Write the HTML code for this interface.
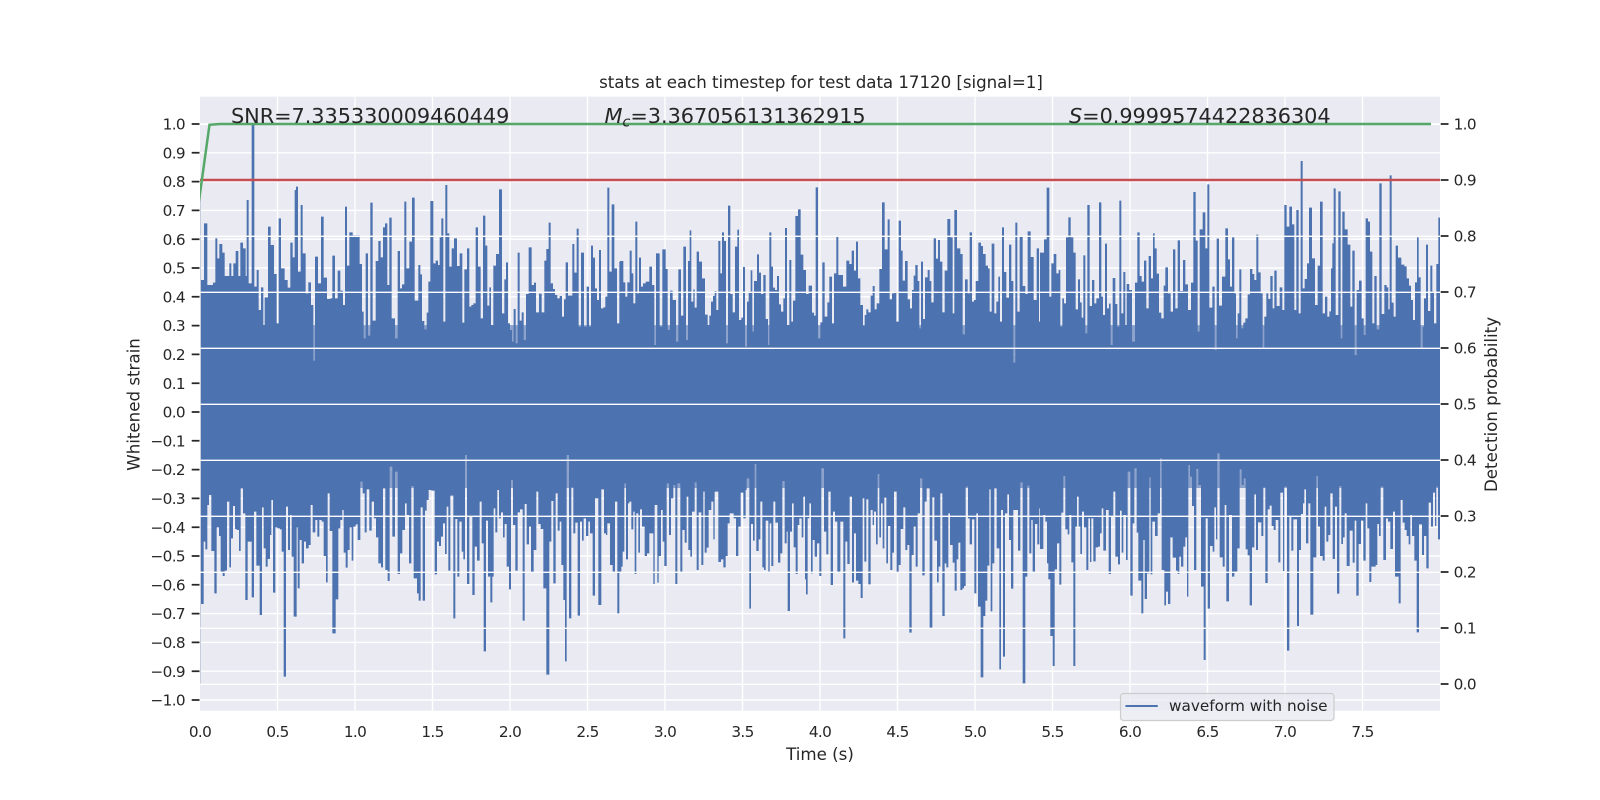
<!DOCTYPE html>
<html>
<head>
<meta charset="utf-8">
<title>stats at each timestep</title>
<style>
html,body{margin:0;padding:0;background:#fff;width:1600px;height:800px;overflow:hidden}
svg{display:block}
text{font-family:"DejaVu Sans",sans-serif;fill:#262626}
.t{font-size:15.28px}
.n{font-size:15.28px;letter-spacing:-.65px}
.l{font-size:16.67px}
.h{font-size:16.67px;letter-spacing:-.04px}
.s{font-size:20.83px;letter-spacing:-.05px}
</style>
</head>
<body>
<svg width="1600" height="800" viewBox="0 0 1600 800" xmlns="http://www.w3.org/2000/svg">
<defs><clipPath id="ax"><rect x="200" y="96.7" width="1240" height="614"/></clipPath></defs>
<rect width="1600" height="800" fill="#fff"/>
<rect x="200" y="96.7" width="1240" height="614" fill="#EAEAF2"/>

<!-- left/vertical grid -->
<path stroke="#fff" stroke-width="1.39" fill="none" d="M200 124H1440M200 152.8H1440M200 181.6H1440M200 210.4H1440M200 239.2H1440M200 268H1440M200 296.8H1440M200 325.6H1440M200 354.4H1440M200 383.2H1440M200 412H1440M200 440.8H1440M200 469.6H1440M200 498.4H1440M200 527.2H1440M200 556H1440M200 584.8H1440M200 613.6H1440M200 642.4H1440M200 671.2H1440M200 700H1440M277.5 96.7V710.7M355 96.7V710.7M432.5 96.7V710.7M510 96.7V710.7M587.5 96.7V710.7M665 96.7V710.7M742.5 96.7V710.7M820 96.7V710.7M897.5 96.7V710.7M975 96.7V710.7M1052.5 96.7V710.7M1130 96.7V710.7M1207.5 96.7V710.7M1285 96.7V710.7M1362.5 96.7V710.7"/>

<!-- waveform -->
<g clip-path="url(#ax)" fill="#4C72B0">
<rect x="200" y="325" width="1240" height="55" fill-opacity=".6"/>
<rect x="200" y="450" width="1240" height="38" fill-opacity=".6"/>
<rect x="200" y="379" width="1240" height="72"/>
<g transform="translate(201,150) scale(.33333)">
<path d="M-3 690V390H9V220H19V405H36V398H43V265H49V325H55V282H64V308H71V378H85V340H91V378H97V340H104V303H112V378H118V278H126V295H134V378H137V150H143V400H152V-78H160V410H167V360H173V480H180V412H187V525H191V442H201V230H209V285H219V372H227V520H233V205H240V355H251V390H260V413H268V278H275V322H281V120H285V110H291V365H299V165H305V310H314V430H322V397H330V465H337V632H342V320H351V400H360V200H368V383H378V447H388V445H394V317H402V445H410V362H418V422H426V465H432V170H438V347H445V247H455V256H466V256H476V342H483V485H488V565H494V310H501V557H508V158H515V512H524V333H532V273H539V322H546V232H552V220H559V405H565V203H572V505H582V565H590V303H597V415H603V403H610V155H616V355H625V275H633V143H641V452H652V345H658V373H663V513H670V538H677V488H682V395H688V153H697V340H704V332H711V345H716V262H721V205H727V515H733V105H739V250H745V350H752V295H759V265H768V348H776V310H784V518H790V358H798V295H805V470H811V465H817V460H824V232H831V350H839V505H846V197H853V287H859V467H865V412H870V525H877V347H885V312H894V118H903V490H910V388H915V337H921V520H927V540H933V575H938V477H944V580H950V308H956V512H962V487H968V570H975V432H983V292H992V405H999V398H1005V487H1014V431H1022V487H1030V332H1036V297H1043V218H1049V400H1056V417H1062V435H1069V445H1076V438H1083V500H1089V448H1094V337H1101V437H1107V437H1114V282H1120V368H1127V236H1133V530H1140V308H1149V530H1157V410H1164V530H1170V287H1176V323H1182V415H1188V450H1194V300H1200V475H1207V472H1213V440H1219V113H1225V365H1232V163H1240V355H1248V520H1255V335H1261V690Z"/>
</g>
<g transform="translate(621,150) scale(.33333)">
<path d="M-3 690V333H7V397H13V440H19V397H26V302H32V370H37V460H43V215H49V430H54V323H60V410H66V400H74V395H85V350H93V405H100V585H105V310H116V530H124V298H134V357H140V540H147V422H155V450H165V575H172V358H180V497H187V290H195V570H201V333H206V241H211V455H217V418H221V473H227V305H234V335H243V385H252V494H260V525H265V497H270V455H276V438H281V423H286V480H292V273H298V370H303V247H309V273H315V580H321V167H328V432H335V487H342V290H349V239H354V510H361V503H366V351H372V590H378V455H383V425H389V361H394V545H399V393H408V313H414V368H420V432H427V375H434V507H441V585H445V247H451V350H456V413H462V420H468V378H474V463H480V485H487V445H492V234H498V525H505V330H511V515H516V452H523V198H531V178H539V314H547V360H555V432H563V407H573V488H579V497H584V112H591V565H598V517H604V337H611V500H619V457H625V380H633V520H639V370H646V260H652V375H660V375H666V410H676V332H685V342H692V302H699V362H705V275H711V385H718V465H726V527H731V495H736V478H742V487H749V437H755V408H761V478H767V460H775V357H783V157H791V298H800V208H806V448H813V430H820V425H826V515H833V212H840V302H845V392H852V333H860V448H867V475H873V420H878V377H883V345H890V393H895V535H900V335H906V507H912V382H920V360H926V393H931V457H938V265H945V326H951V270H957V335H964V487H971V362H979V207H988V262H995V490H1000V180H1008V295H1018V312H1025V553H1032V388H1040V430H1046V247H1053V455H1059V450H1064V393H1072V278H1080V288H1086V312H1094V347H1101V355H1106V485H1112V281H1120V490H1126V455H1132V380H1137V515H1143V232H1149V366H1156V443H1164V284H1171V393H1177V638H1183V218H1189V485H1196V261H1205V408H1213V432H1220V244H1229V321H1238V450H1247V295H1254V515H1261V690Z"/>
</g>
<g transform="translate(1031,150) scale(.33333)">
<path d="M27 690V308H39V268H47V113H55V440H61V340H68V312H76V370H83V360H88V530H94V445H99V460H105V262H112V202H119V262H127V308H134V478H141V388H147V457H152V503H157V316H163V550H169V165H176V468H183V390H190V460H196V445H204V157H211V440H216V495H222V281H228V475H234V461H239V585H245V384H253V462H259V530H265V152H271V490H277V366H283V525H287V402H295V420H303V575H312V398H319V247H326V378H332V395H339V332H346V475H353V318H360V385H366V250H371V295H377V371H384V488H391V505H398V407H403V352H411V430H419V485H426V298H433V475H440V271H447V423H456V330H463V403H471V480H480V398H487V126H494V272H500V545H506V238H515V187H523V295H529V103H535V473H544V410H551V600H557V266H564V467H573V380H583V235H591V328H597V410H603V262H610V430H615V565H620V490H625V358H631V535H637V518H643V505H650V433H657V357H664V372H670V390H676V254H682V367H689V430H695V595H700V500H706V430H712V447H718V378H725V475H730V362H737V468H746V412H754V480H760V165H767V230H775V170H783V223H790V480H796V180H803V490H809V33H815V415H821V387H828V340H834V173H843V325H852V465H860V347H867V155H875V490H882V440H889V500H895V484H900V355H904V280H908V115H914V495H922V124H929V565H934V185H941V238H950V284H958V470H964V302H971V615H977V420H984V392H992V505H998V555H1004V205H1011V215H1017V305H1024V520H1030V378H1037V538H1045V100H1052V492H1060V405H1067V412H1072V478H1076V76H1082V458H1088V500H1094V287H1101V323H1111V344H1120V349H1127V385H1134V407H1140V450H1146V510H1152V397H1158V262H1163V382H1169V595H1175V530H1179V445H1185V284H1191V483H1198V347H1204V425H1209V520H1216V342H1222V203H1232V690Z"/>
</g>
<g transform="translate(201,450) scale(.33333)">
<path d="M-3 0V462H8V275H13V298H19V165H24V135H31V303H40V430H47V232H54V258H59V365H65V378H71V362H78V155H85V352H90V265H96V168H102V237H107V240H114V303H119V115H126V190H133V450H140V275H145V275H152V442H159V185H166V347H176V495H183V172H188V295H194V350H200V327H207V255H211V150H216V428H223V232H229V235H237V238H242V305H248V680H255V170H261V300H267V195H272V320H278V500H287V232H290V415H296V270H302V340H309V275H315V295H323V285H329V165H335V247H343V210H349V260H355V210H362V215H368V318H375V397H380V130H386V243H394V550H404V448H412V235H418V210H424V180H428V308H434V353H440V300H446V232H452V332H457V230H464V223H470V270H478V95H485V130H491V247H497V118H505V242H512V155H519V205H525V262H532V340H540V352H546V115H553V360H560V393H566V50H574V260H582V65H590V372H597V310H604V240H612V160H617V195H624V340H631V108H638V385H648V430H653V452H659V172H665V452H672V182H677V150H683V120H691V122H701V373H708V275H714V288H720V260H726V220H732V312H737V170H742V362H748V137H757V505H763V207H769V380H775V215H782V305H787V328H792V15H798V402H805V200H814V435H821V290H828V332H836V155H842V280H848V604H855V212H861V380H868V457H874V380H878V175H883V247H889V120H894V205H900V187H906V262H911V222H917V350H924V418H930V90H936V225H943V362H950V187H957V178H965V512H971V162H977V283H984V230H990V368H998V300H1006V125H1012V222H1019V237H1027V415H1036V674H1045V275H1051V153H1057V400H1064V130H1070V242H1076V215H1081V345H1087V450H1092V634H1097V15H1104V505H1111V112H1117V250H1123V218H1130V497H1137V215H1143V272H1148V205H1155V258H1162V215H1167V250H1175V437H1182V145H1192V465H1201V118H1209V250H1215V255H1219V220H1227V345H1235V365H1242V155H1249V490H1255V365H1261V0Z"/>
</g>
<g transform="translate(621,450) scale(.33333)">
<path d="M-3 0V350H5V305H10V100H15V328H21V160H25V155H31V238H37V185H41V372H46V190H52V308H57V178H63V230H71V318H78V310H85V250H90V250H97V402H101V165H109V398H113V318H120V180H125V275H130V348H137V100H144V255H150V145H157V105H163V402H169V100H178V365H184V240H191V278H197V140H202V300H208V320H213V185H221V97H227V360H233V187H241V345H247V125H251V308H257V293H263V180H271V155H277V268H281V125H292V336H300V328H307V352H314V318H320V220H326V190H332V190H338V205H345V318H352V230H359V128H367V205H374V120H377V85H385V476H390V222H396V272H401V42H406V303H413V268H418V155H424V352H429V360H434V212H442V365H446V220H451V348H457V155H463V218H471V338H478V310H484V93H491V280H497V245H500V483H507V245H513V160H518V292H524V372H530V225H535V205H542V262H547V140H552V388H555V433H560V205H565V160H570V370H575V270H581V320H588V280H595V378H601V55H609V245H616V313H622V125H629V405H636V185H642V215H649V365H658V215H667V565H673V275H679V342H686V140H693V397H699V250H705V392H712V402H719V444H725V145H730V335H736V148H742V403H749V180H755V225H759V185H765V283H770V72H775V262H780V160H785V295H790V143H796V340H801V228H808V360H814V308H819V125H827V368H833V345H839V237H847V172H853V300H859V285H865V548H872V315H878V230H884V350H890V190H897V85H904V376H911V155H917V115H926V536H934V142H940V272H948V397H953V350H958V130H964V498H971V340H976V352H982V190H987V285H995V338H1001V422H1007V328H1012V278H1018V420H1024V415H1029V408H1034V110H1041V205H1046V283H1053V208H1060V430H1066V190H1071V470H1079V682H1087V498H1093V452H1099V347H1105V118H1109V484H1114V340H1120V115H1127V295H1135V658H1140V180H1146V620H1152V190H1159V133H1164V270H1170V416H1177V180H1184V180H1191V302H1198V97H1205V700H1213V380H1219V107H1225V310H1231V210H1235V365H1242V222H1249V283H1255V175H1261V0Z"/>
</g>
<g transform="translate(1031,450) scale(.33333)">
<path d="M27 0V297H37V195H43V215H48V340H52V388H58V558H65V648H71V358H78V280H85V404H91V188H97V78H103V238H110V253H115V195H121V337H127V648H133V230H138V140H143V230H148V312H153V185H159V232H166V360H172V205H177V336H181V205H187V334H194V292H201V290H207V250H212V175H217V302H225V180H233V372H240V198H247V125H253V320H261V343H267V182H272V308H277V195H285V330H290V65H298V437H305V220H310V55H317V248H322V392H331V490H337V270H341V447H348V370H355V82H359V373H364V215H372V258H380V190H387V25H392V360H400V466H405V425H411V462H418V262H425V323H435V362H440V372H445V320H450V350H457V290H463V262H468V440H472V45H477V80H483V168H489V360H496V57H502V105H510V410H518V630H524V205H530V476H537V288H545V305H550V172H555V268H559V10H566V322H575V350H581V165H586V454H594V195H603V380H610V365H619V295H626V58H632V105H638V85H644V298H650V316H656V466H663V292H670V133H675V300H681V217H691V258H697V112H703V399H710V178H716V167H722V228H728V240H734V210H742V337H748V128H756V363H760V110H768V602H775V200H781V302H787V208H798V528H804V300H810V192H816V160H820V118H825V280H832V160H838V494H847V322H856V78H861V230H867V318H875V332H881V170H886V275H892V255H898V130H905V327H912V170H918V431H925V108H931V282H936V262H941V190H947V348H956V242H965V338H971V212H976V437H983V282H990V212H997V332H1004V160H1009V235H1015V396H1021V350H1028V350H1034V345H1039V222H1044V258H1049V110H1057V330H1065V205H1071V215H1078V297H1086V185H1092V380H1100V380H1103V460H1109V150H1115V218H1121V240H1127V258H1133V283H1138V195H1143V258H1150V332H1157V547H1164V223H1173V315H1179V258H1186V355H1193V158H1200V230H1206V128H1212V228H1216V110H1221V268H1232V0Z"/>
</g>
</g>

<!-- left-edge sliver -->
<rect x="200" y="190" width="1" height="494" fill="#C8CDDC"/>

<!-- twin-axis grid -->
<path stroke="#fff" stroke-width="1.39" fill="none" d="M200 124.3H1440M200 180.3H1440M200 236.3H1440M200 292.3H1440M200 348.3H1440M200 404.3H1440M200 460.3H1440M200 516.3H1440M200 572.3H1440M200 628.3H1440M200 684.3H1440"/>

<!-- probability + threshold -->
<g clip-path="url(#ax)" fill="none" stroke-width="2.5">
<path stroke="#C44E52" d="M200 180H1440"/>
<path stroke="#55A868" d="M198 208L209.5 124.8L220 124H1431"/>
</g>

<!-- ticks -->
<path stroke="#262626" stroke-width="1.74" fill="none" d="M191.7 124H199.5M191.7 152.8H199.5M191.7 181.6H199.5M191.7 210.4H199.5M191.7 239.2H199.5M191.7 268H199.5M191.7 296.8H199.5M191.7 325.6H199.5M191.7 354.4H199.5M191.7 383.2H199.5M191.7 412H199.5M191.7 440.8H199.5M191.7 469.6H199.5M191.7 498.4H199.5M191.7 527.2H199.5M191.7 556H199.5M191.7 584.8H199.5M191.7 613.6H199.5M191.7 642.4H199.5M191.7 671.2H199.5M191.7 700H199.5M1440.7 124H1448.5M1440.7 180H1448.5M1440.7 236H1448.5M1440.7 292H1448.5M1440.7 348H1448.5M1440.7 404H1448.5M1440.7 460H1448.5M1440.7 516H1448.5M1440.7 572H1448.5M1440.7 628H1448.5M1440.7 684H1448.5"/>

<!-- left y labels -->
<g text-anchor="end">
<text class="n" x="185" y="129.6">1.0</text>
<text class="n" x="185" y="158.4">0.9</text>
<text class="n" x="185" y="187.2">0.8</text>
<text class="n" x="185" y="216">0.7</text>
<text class="n" x="185" y="244.8">0.6</text>
<text class="n" x="185" y="273.6">0.5</text>
<text class="n" x="185" y="302.4">0.4</text>
<text class="n" x="185" y="331.2">0.3</text>
<text class="n" x="185" y="360">0.2</text>
<text class="n" x="185" y="388.8">0.1</text>
<text class="n" x="185" y="417.6">0.0</text>
<text class="n" x="185" y="446.4">−0.1</text>
<text class="n" x="185" y="475.2">−0.2</text>
<text class="n" x="185" y="504">−0.3</text>
<text class="n" x="185" y="532.8">−0.4</text>
<text class="n" x="185" y="561.6">−0.5</text>
<text class="n" x="185" y="590.4">−0.6</text>
<text class="n" x="185" y="619.2">−0.7</text>
<text class="n" x="185" y="648">−0.8</text>
<text class="n" x="185" y="676.8">−0.9</text>
<text class="n" x="185" y="705.6">−1.0</text>
</g>

<!-- right y labels -->
<g>
<text class="n" x="1453.6" y="129.6">1.0</text>
<text class="n" x="1453.6" y="185.6">0.9</text>
<text class="n" x="1453.6" y="241.6">0.8</text>
<text class="n" x="1453.6" y="297.6">0.7</text>
<text class="n" x="1453.6" y="353.6">0.6</text>
<text class="n" x="1453.6" y="409.6">0.5</text>
<text class="n" x="1453.6" y="465.6">0.4</text>
<text class="n" x="1453.6" y="521.6">0.3</text>
<text class="n" x="1453.6" y="577.6">0.2</text>
<text class="n" x="1453.6" y="633.6">0.1</text>
<text class="n" x="1453.6" y="689.6">0.0</text>
</g>

<!-- x labels -->
<g text-anchor="middle">
<text class="n" x="200" y="737">0.0</text>
<text class="n" x="277.5" y="737">0.5</text>
<text class="n" x="355" y="737">1.0</text>
<text class="n" x="432.5" y="737">1.5</text>
<text class="n" x="510" y="737">2.0</text>
<text class="n" x="587.5" y="737">2.5</text>
<text class="n" x="665" y="737">3.0</text>
<text class="n" x="742.5" y="737">3.5</text>
<text class="n" x="820" y="737">4.0</text>
<text class="n" x="897.5" y="737">4.5</text>
<text class="n" x="975" y="737">5.0</text>
<text class="n" x="1052.5" y="737">5.5</text>
<text class="n" x="1130" y="737">6.0</text>
<text class="n" x="1207.5" y="737">6.5</text>
<text class="n" x="1285" y="737">7.0</text>
<text class="n" x="1362.5" y="737">7.5</text>
</g>

<!-- titles and axis labels -->
<text class="h" x="821" y="88" text-anchor="middle">stats at each timestep for test data 17120 [signal=1]</text>
<text class="l" x="820" y="760" text-anchor="middle">Time (s)</text>
<text class="l" transform="translate(139.5,404.5) rotate(-90)" text-anchor="middle">Whitened strain</text>
<text class="l" transform="translate(1497,404.5) rotate(-90)" text-anchor="middle">Detection probability</text>

<!-- stats -->
<text class="s" x="231" y="123">SNR=7.335330009460449</text>
<text class="s" x="604.5" y="123"><tspan font-style="italic">M</tspan><tspan font-style="italic" font-size="14.6" dy="3.5">c</tspan><tspan dy="-3.5">=3.367056131362915</tspan></text>
<text class="s" x="1069" y="123"><tspan font-style="italic">S</tspan>=0.9999574422836304</text>

<!-- legend -->
<rect x="1120.5" y="693.5" width="213.5" height="27" rx="3" ry="3" fill="#EAEAF2" fill-opacity=".8" stroke="#CCCCCC" stroke-width="1.2"/>
<path stroke="#4C72B0" stroke-width="2.08" d="M1125.5 706H1157.8"/>
<text class="t" x="1169" y="711">waveform with noise</text>
</svg>
</body>
</html>
